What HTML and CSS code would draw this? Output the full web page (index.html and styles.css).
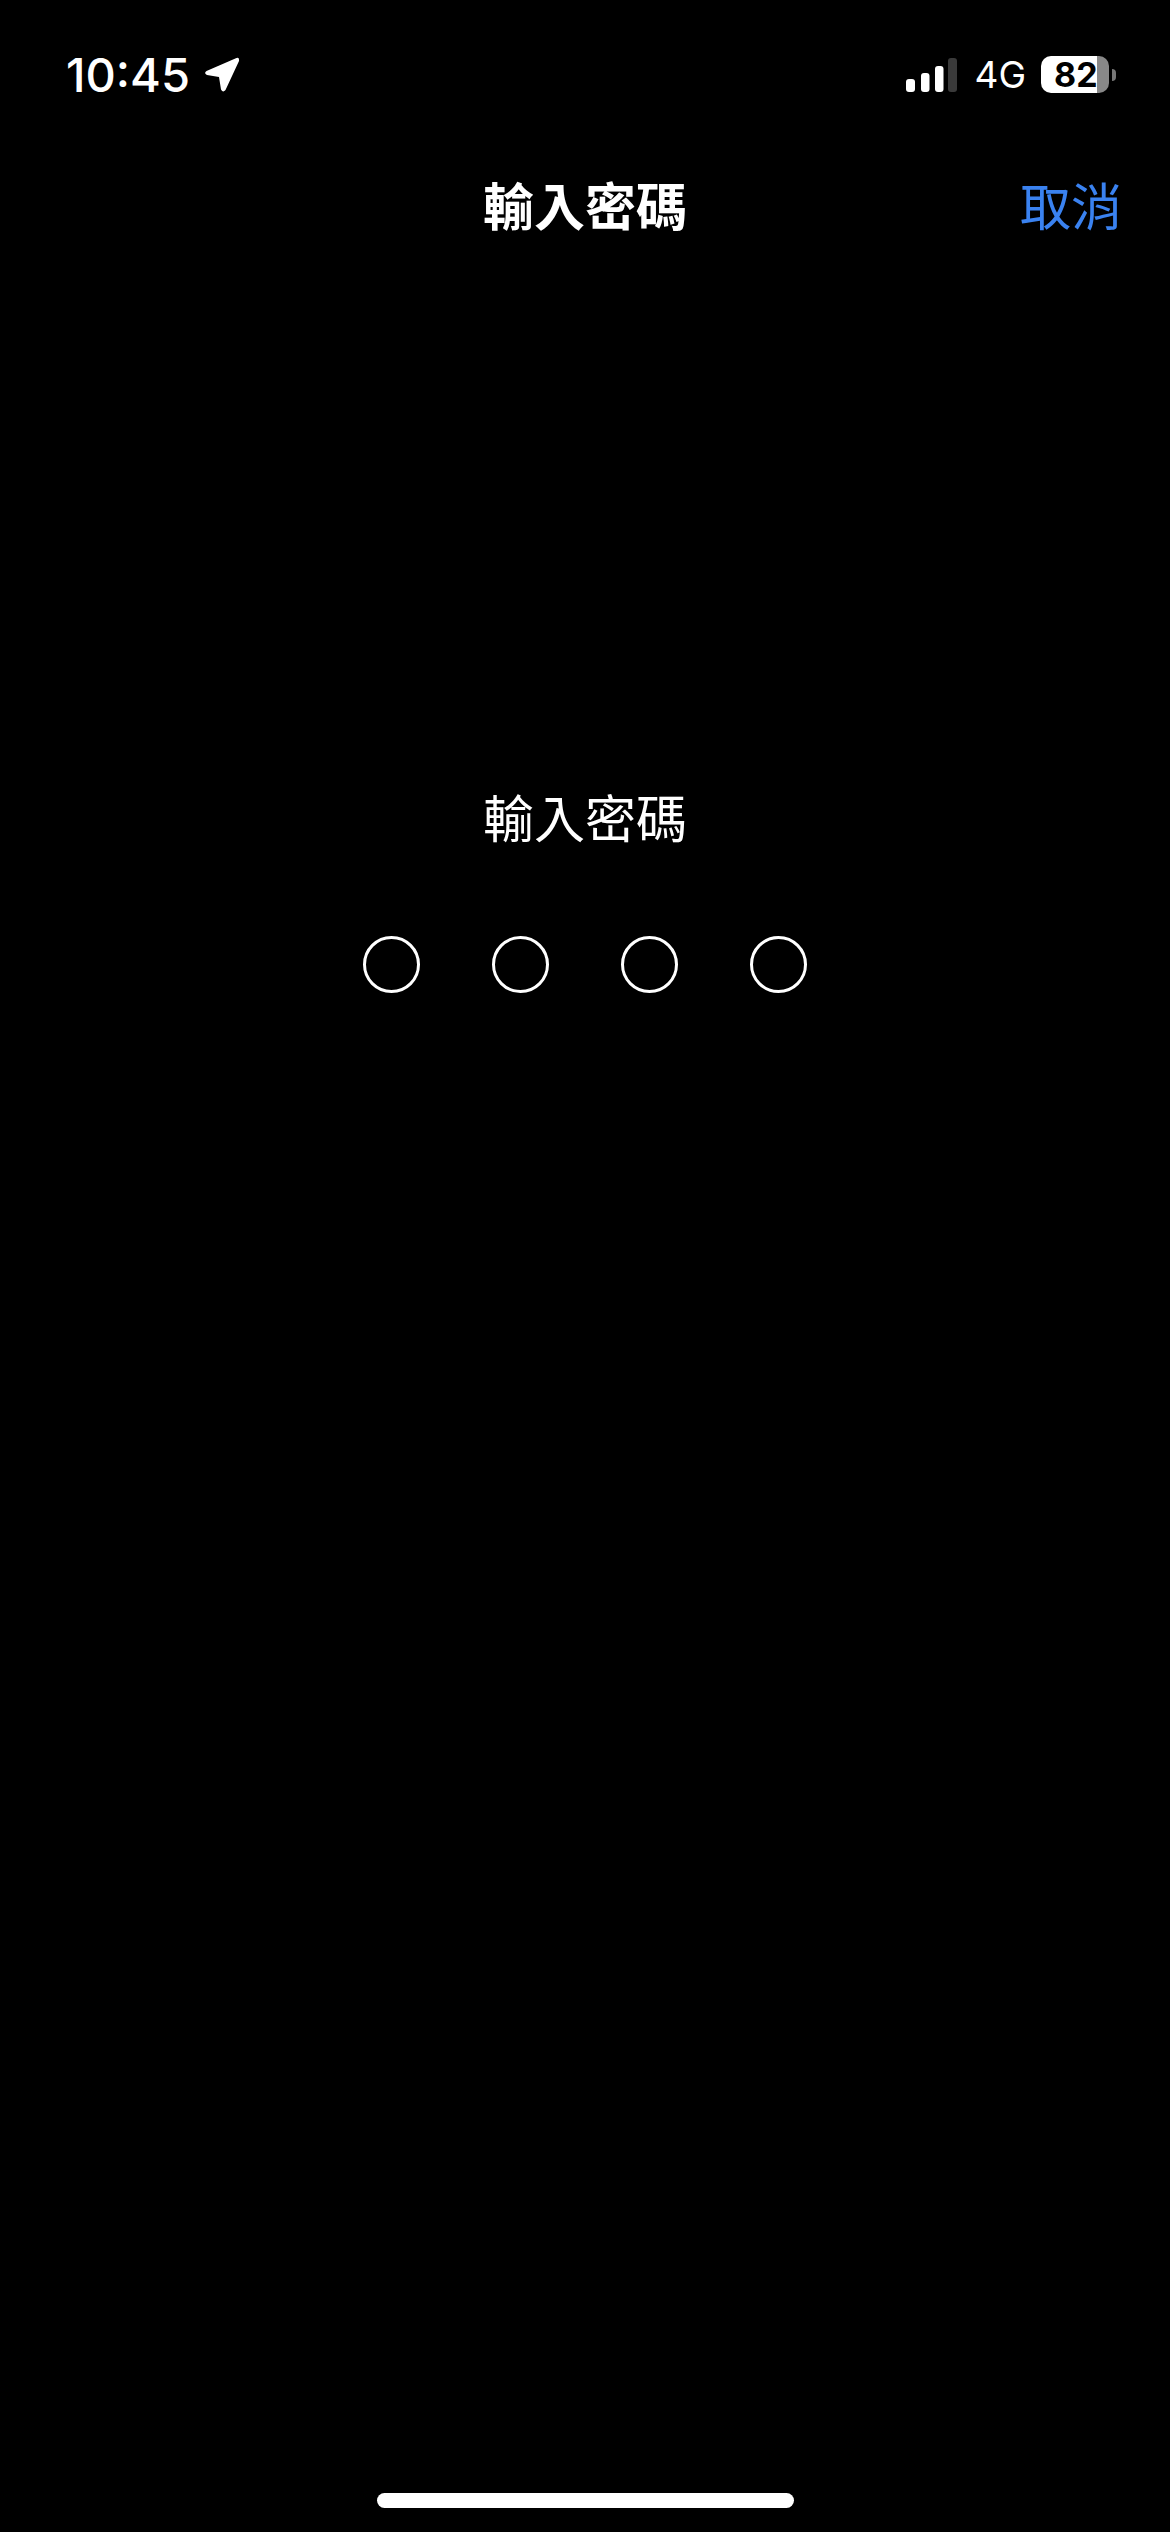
FILE: index.html
```html
<!DOCTYPE html>
<html>
  <head>
    <title>輸入密碼</title>
    <link rel="stylesheet" href="styles.css">
  </head>
  <body>
    <div class="status_bar">
      <div class="status_left">
        <span class="time">10:45</span>
        <svg class="location" width="36" height="36" viewBox="0 0 36 36">
          <path d="M32.5 1 L2.5 14 Q-0.5 16.5 3 18 L15 20 L17 32.5 Q19 36 21.5 33 L35 4 Q35.5 0 32.5 1 Z" fill="#fff"/>
        </svg>
      </div>
      <div class="status_right">
        <svg class="signal" width="51" height="34" viewBox="0 0 51 34">
          <rect x="0" y="21" width="9" height="13" rx="3" fill="#fff"/>
          <rect x="15" y="15" width="8.5" height="19" rx="3" fill="#fff"/>
          <rect x="29" y="8" width="8.5" height="26" rx="3" fill="#fff"/>
          <rect x="42" y="0" width="9" height="34" rx="3" fill="#3a3a3a"/>
        </svg>
        <span class="network">4G</span>
        <div class="battery">
          <div class="battery_body">82</div>
          <div class="battery_tip"></div>
        </div>
      </div>
    </div>

    <div class="nav_bar">
      <span></span>
      <h1 class="nav_title">輸入密碼</h1>
      <a class="nav_cancel">取消</a>
    </div>

    <section class="passcode">
      <h2 class="passcode_label">輸入密碼</h2>
      <div class="passcode_dots">
        <div class="dot"></div>
        <div class="dot"></div>
        <div class="dot"></div>
        <div class="dot"></div>
      </div>
    </section>

    <div class="home_bar"></div>
  </body>
</html>
```

FILE: styles.css
```css
html, body {
  margin: 0;
  background-color: #000;
}

body {
  height: 2532px;
  display: flex;
  flex-direction: column;
  color: #fff;
  font-family: "Noto Sans CJK TC", "Inter", sans-serif;
  overflow: hidden;
}

/* status bar */
.status_bar {
  display: flex;
  justify-content: space-between;
  align-items: center;
  height: 37px;
  padding: 56px 54px 0 66px;
}

.status_left {
  display: flex;
  align-items: center;
  gap: 14px;
}

.time {
  font-family: "Inter", sans-serif;
  font-size: 47px;
  font-weight: 500;
  line-height: 37px;
}

.location {
  display: block;
}

.status_right {
  display: flex;
  align-items: center;
}

.signal {
  display: block;
}

.network {
  font-family: "Inter", sans-serif;
  font-size: 37px;
  font-weight: 400;
  line-height: 37px;
  margin-left: 17px;
}

.battery {
  display: flex;
  align-items: center;
  margin-left: 15px;
}

.battery_body {
  width: 68px;
  height: 37px;
  border-radius: 10px;
  background: linear-gradient(to right, #fff 56px, #888 56px);
  color: #000;
  font-family: "Inter", sans-serif;
  font-size: 34px;
  font-weight: 700;
  line-height: 37px;
  padding-left: 13px;
  box-sizing: border-box;
}

.battery_tip {
  width: 4px;
  height: 12px;
  margin-left: 3px;
  background-color: #777;
  border-radius: 0 6px 6px 0;
}

/* nav */
.nav_bar {
  display: grid;
  grid-template-columns: 1fr auto 1fr;
  align-items: center;
  margin-top: 75px;
  padding: 0 48px;
}

.nav_title {
  margin: 0;
  font-size: 51px;
  font-weight: 700;
  line-height: 72px;
}

.nav_cancel {
  justify-self: end;
  font-size: 51px;
  line-height: 72px;
  color: #3a82f0;
}

/* passcode */
.passcode {
  display: flex;
  flex-direction: column;
  align-items: center;
  margin-top: 540px;
}

.passcode_label {
  margin: 0;
  font-size: 51px;
  font-weight: 400;
  line-height: 72px;
}

.passcode_dots {
  display: flex;
  gap: 72px;
  margin-top: 84px;
}

.dot {
  width: 57px;
  height: 57px;
  border: 3px solid #fff;
  border-radius: 50%;
  box-sizing: border-box;
}

.home_bar {
  width: 417px;
  height: 15px;
  margin: auto auto 24px;
  border-radius: 8px;
  background-color: #fff;
}
```
